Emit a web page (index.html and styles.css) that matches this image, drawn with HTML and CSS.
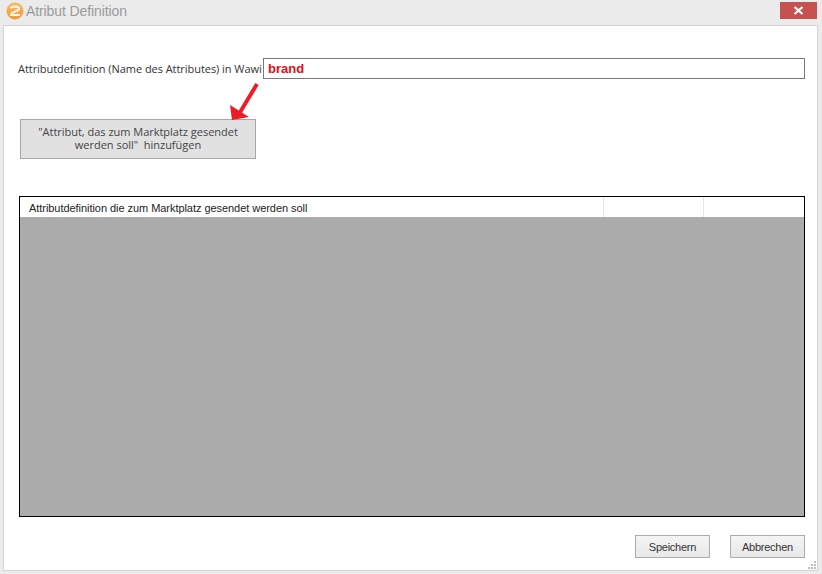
FILE: index.html
```html
<!DOCTYPE html>
<html lang="de">
<head>
<meta charset="utf-8">
<title>Atribut Definition</title>
<link rel="stylesheet" href="styles.css">
</head>
<body>
<div class="window">
  <header class="titlebar">
    <svg class="logo" width="18" height="18" viewBox="0 0 18 18">
      <defs>
        <linearGradient id="logoFill" x1="0" y1="0" x2="0" y2="1">
          <stop offset="0" stop-color="#f7bb6a"/>
          <stop offset="1" stop-color="#f29a35"/>
        </linearGradient>
      </defs>
      <circle cx="9" cy="9" r="8.5" fill="url(#logoFill)"/>
      <path d="M4.5 6 C6.5 4.2 13 4 13 6.8 C13 9.6 5.5 8.8 5.2 13 L14 13" fill="none" stroke="#fff6e6" stroke-width="2.2"/>
    </svg>
    <span class="title">Atribut Definition</span>
    <button class="close" type="button" aria-label="Schließen">
      <svg width="11" height="9" viewBox="0 0 11 9"><path d="M1.5 1 L9.5 8 M9.5 1 L1.5 8" stroke="#fff" stroke-width="2.2"/></svg>
    </button>
  </header>
  <main class="content">
    <div class="field-row">
      <label class="field-label" for="attr">Attributdefinition (Name des Attributes) in Wawi</label>
      <input class="field-input" id="attr" value="brand">
    </div>
    <div class="add-wrap">
      <button class="add-btn" type="button">"Attribut, das zum Marktplatz gesendet<br>werden soll"&nbsp; hinzufügen</button>
      <svg class="arrow" width="34" height="42" viewBox="0 0 34 42">
        <path d="M29 3 L11 33" stroke="#ee1c25" stroke-width="4" fill="none"/>
        <path d="M4 39 L2 24 L21 36 Z" fill="#ee1c25"/>
      </svg>
    </div>
    <section class="grid">
      <div class="grid-head">
        <div class="col col-main">Attributdefinition die zum Marktplatz gesendet werden soll</div>
        <div class="col col-mid"></div>
        <div class="col col-end"></div>
      </div>
      <div class="grid-body"></div>
    </section>
    <footer class="actions">
      <button class="btn" type="button">Speichern</button>
      <button class="btn" type="button">Abbrechen</button>
    </footer>
    <svg class="grip" width="10" height="10" viewBox="0 0 10 10">
      <path d="M7 1h2v2H7z M4 4h2v2H4z M7 4h2v2H7z M1 7h2v2H1z M4 7h2v2H4z M7 7h2v2H7z" fill="#bdbdbd"/>
    </svg>
  </main>
</div>
</body>
</html>
```

FILE: styles.css
```css
* { box-sizing: border-box; }
html, body { margin: 0; height: 100%; }
body {
  background: #ebebeb;
  font-family: "Open Sans", "Liberation Sans", sans-serif;
  font-size: 11px;
  color: #222;
  overflow: hidden;
}
button, input { font-family: inherit; }
.window {
  width: 822px;
  height: 574px;
  display: flex;
  flex-direction: column;
  padding: 0 4px 3px 3px;
}
.titlebar {
  height: 25px;
  flex: none;
  display: flex;
  align-items: center;
  padding: 0 1px 3px 3px;
  gap: 2px;
}
.logo { flex: none; }
.title {
  flex: 1;
  font-family: "Liberation Sans", sans-serif;
  font-size: 14px;
  letter-spacing: -0.1px;
  color: #9a9a9a;
}
.close {
  width: 37px;
  height: 17px;
  margin-top: -1px;
  border: 0;
  padding: 0;
  background: #c75050;
  display: flex;
  align-items: center;
  justify-content: center;
}
.content {
  position: relative;
  flex: 1;
  background: #fff;
  border: 1px solid #d4d4d4;
  padding: 32px 12px 0 14px;
  display: flex;
  flex-direction: column;
}
.field-row {
  display: flex;
  align-items: center;
  height: 21px;
}
.field-label {
  width: 245px;
  flex: none;
  white-space: nowrap;
  font-size: 11px;
  letter-spacing: -0.05px;
  color: #333;
}
.field-input {
  flex: 1;
  height: 21px;
  border: 1px solid #7a7a7a;
  background: #fff;
  padding: 0 4px;
  font-family: "Liberation Sans", sans-serif;
  font-size: 13px;
  font-weight: bold;
  color: #e60c18;
  outline: 0;
  min-width: 0;
}
.add-wrap { position: relative; margin: 40px 0 0 2px; width: 236px; }
.add-btn {
  display: block;
  width: 236px;
  height: 40px;
  background: #e1e1e1;
  border: 1px solid #a8a8a8;
  padding: 0 0 2px;
  font-size: 11px;
  line-height: 13px;
  letter-spacing: -0.02px;
  color: #444;
}
.arrow { position: absolute; left: 208px; top: -38px; }
.grid {
  margin: 37px 0 0 1px;
  height: 321px;
  border: 1px solid #000;
  display: flex;
  flex-direction: column;
  flex: none;
}
.grid-head {
  height: 20px;
  flex: none;
  display: flex;
  background: #fff;
}
.col {
  border-right: 1px solid #e6e6e6;
  line-height: 23px;
  font-family: "Liberation Sans", sans-serif;
  font-size: 11px;
  letter-spacing: -0.05px;
  color: #222;
  white-space: nowrap;
}
.col-main { width: 584px; padding-left: 9px; }
.col-mid { width: 100px; }
.col-end { flex: 1; border-right: 0; }
.grid-body { flex: 1; background: #ababab; }
.actions {
  display: flex;
  justify-content: flex-end;
  gap: 20px;
  margin-top: 18px;
}
.btn {
  width: 75px;
  height: 23px;
  padding: 0;
  background: linear-gradient(#f4f4f4, #e8e8e8);
  border: 1px solid #acacac;
  font-family: "Liberation Sans", sans-serif;
  font-size: 11px;
  letter-spacing: -0.25px;
  color: #333;
}
.grip { position: absolute; right: 0; bottom: 0; }
```
